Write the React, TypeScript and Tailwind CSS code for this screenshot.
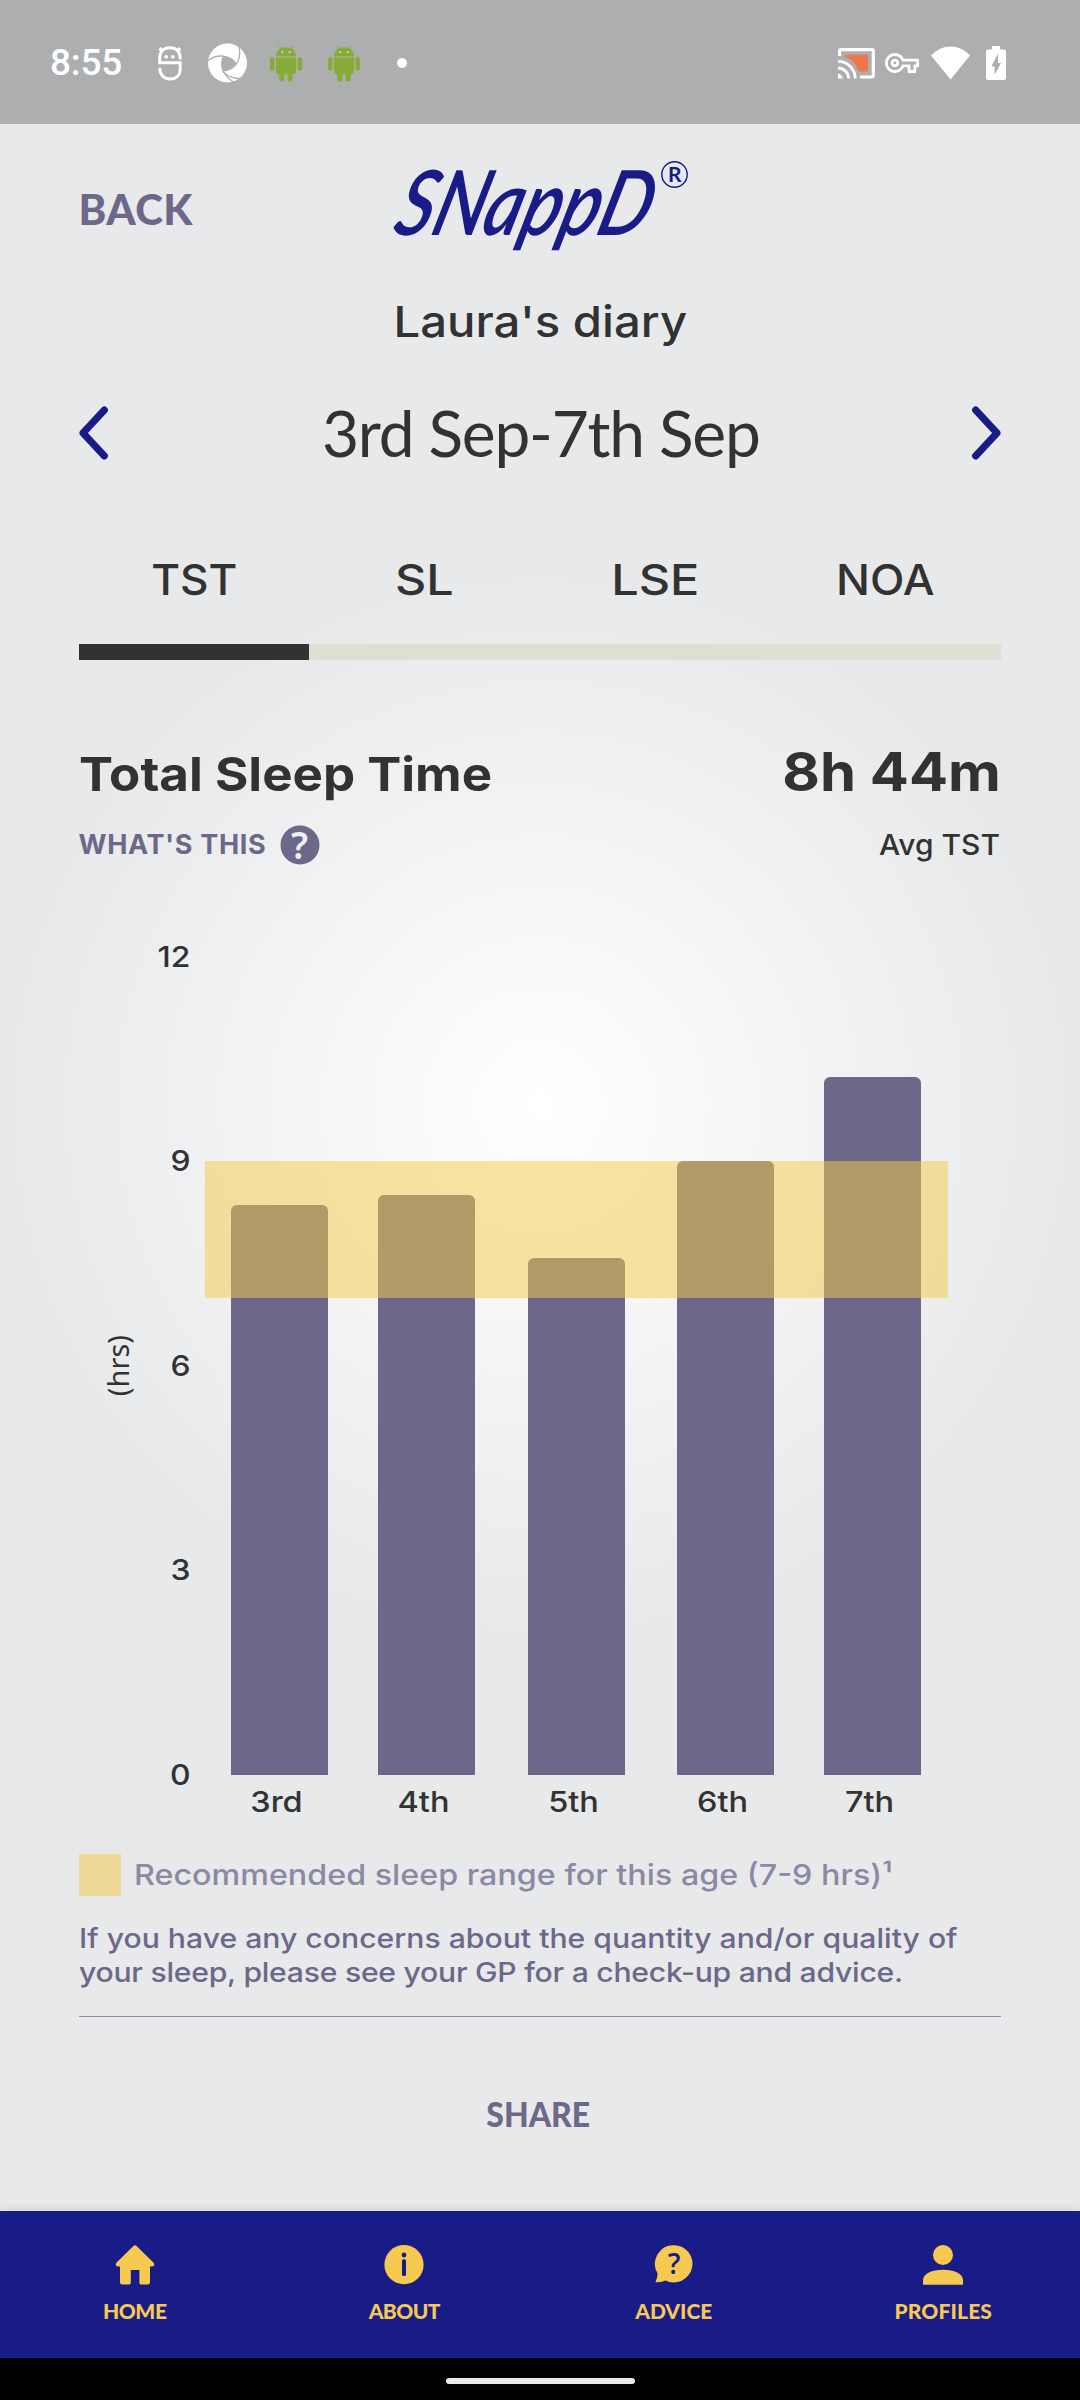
import { MdOutlineVpnKey } from 'react-icons/md';

const tabs = [
  { label: 'TST', className: 'scale-x-[1.027]' },
  { label: 'SL', className: 'scale-x-[1.127]' },
  { label: 'LSE', className: 'scale-x-[1.13]' },
  { label: 'NOA', className: 'scale-x-[1.045]' },
];

const ticks = [12, 9, 6, 3, 0];
const MAX_HOURS = 12;

const nights = [
  { day: '3rd', hours: 8.35, gap: '' },
  { day: '4th', hours: 8.5, gap: 'ml-[50px]' },
  { day: '5th', hours: 7.583, gap: 'ml-[52.5px]' },
  { day: '6th', hours: 9, gap: 'ml-[52.5px]' },
  { day: '7th', hours: 10.24, gap: 'ml-[50px]' },
];

const navItems = [
  { label: 'HOME', icon: HomeIcon, className: 'tracking-[-0.4px]' },
  { label: 'ABOUT', icon: AboutIcon, className: 'tracking-[-0.6px]' },
  { label: 'ADVICE', icon: AdviceIcon, className: '' },
  { label: 'PROFILES', icon: ProfilesIcon, className: 'tracking-[0.15px]' },
];

function HomeIcon() {
  return (
    <svg width="40" height="40" viewBox="0 0 40 40" fill="#f6c950">
      <path d="M18.4 1Q20 -.4 21.6 1L38.4 17.4Q40.6 20.8 37.4 21.4H35V37.6Q35 39.4 33.2 39.4H25.8Q24.4 39.4 24.4 37.8V25H15.8V37.8Q15.8 39.4 14.2 39.4H6.8Q5 39.4 5 37.6V21.4H2.6Q-.6 20.8 1.6 17.4Z" />
    </svg>
  );
}

function AboutIcon() {
  return (
    <svg width="40" height="40" viewBox="0 0 40 40">
      <circle cx="20" cy="19.7" r="19.6" fill="#f6c950" />
      <circle cx="20" cy="10" r="2.4" fill="#191b87" />
      <rect x="18" y="14.3" width="4" height="16.7" rx="1.6" fill="#191b87" />
    </svg>
  );
}

function AdviceIcon() {
  return (
    <svg width="40" height="40" viewBox="0 0 40 40">
      <path d="M20 .2A18.6 18.6 0 1 1 11.5 35.4Q6 37.8 1.4 37.2Q3.4 33.4 3.6 28.4A18.6 18.6 0 0 1 20 .2Z" fill="#f6c950" />
      <text x="20" y="28.8" textAnchor="middle" className="font-['Open_Sans',sans-serif] text-[28px] font-semibold" fill="#191b87">?</text>
    </svg>
  );
}

function ProfilesIcon() {
  return (
    <svg width="40" height="40" viewBox="0 0 40 40" fill="#f6c950">
      <circle cx="20" cy="10" r="10" />
      <path d="M0 39.7V35C0 28.6 9 24.7 20 24.7S40 28.6 40 35V39.7Z" />
    </svg>
  );
}

function MintIcon() {
  return (
    <svg width="24" height="35" viewBox="0 0 24 35" fill="none" stroke="#fff" strokeWidth="3">
      <path d="M22.2 13.6V12C22.2 5.4 18 1.8 12 1.8S1.7 5.4 1.7 12V16.8H22.2V23C22.2 29 18.4 33 12 33S1.8 29 1.8 21.8" />
      <path d="M1.6 2.2 4.6 5.6M22 2.2 19 5.6" strokeWidth="3.4" />
      <circle cx="8.2" cy="10.8" r="1.9" fill="#fff" stroke="none" />
      <circle cx="14.8" cy="10.8" r="1.9" fill="#fff" stroke="none" />
    </svg>
  );
}

function ApertureIcon() {
  return (
    <svg width="39" height="40" viewBox="0 0 39 40" className="ml-[26px]">
      <circle cx="19.5" cy="20" r="19.5" fill="#fff" />
      <path d="M15.3 13.2Q23.5 14 28.2 20.5Q23 26.8 14.8 27.6Q12.4 20 15.3 13.2Z" fill="#adaeb0" />
      <g fill="none" stroke="#adaeb0" strokeWidth="1.3">
        <path d="M0 17.6Q7.5 12 15.5 13.2Q24 14.6 28 20.5" />
        <path d="M15.4 13Q11.8 22 15.6 29Q19.5 36 27 39.6" />
        <path d="M14.6 27.8Q25.6 27 29.8 18.6Q33 11.6 30.8 3.6" />
        <path d="M15 28.6Q23 37 35.6 35.2" />
      </g>
    </svg>
  );
}

function AndroidIcon({ className }: { className: string }) {
  return (
    <svg width="32" height="37" viewBox="0 0 32 37" fill="#87ab35" className={className}>
      <path d="M6 11.3C6 5.6 10.4 2.3 16 2.3S26 5.6 26 11.3Z" />
      <path d="M6 12.4H26V27Q26 29.3 23.7 29.3H8.3Q6 29.3 6 27Z" />
      <rect x="0" y="12.2" width="4.6" height="13.6" rx="2.2" />
      <rect x="27.4" y="12.2" width="4.6" height="13.6" rx="2.2" />
      <rect x="9.3" y="25" width="5" height="11.6" rx="2.2" />
      <rect x="17.7" y="25" width="5" height="11.6" rx="2.2" />
      <path d="M9.3 .4 11.2 3.8M22.7 .4 20.8 3.8" stroke="#87ab35" strokeWidth="1" />
      <circle cx="12.3" cy="7.2" r="1.1" fill="#cfd6bb" />
      <circle cx="19.7" cy="7.2" r="1.1" fill="#cfd6bb" />
    </svg>
  );
}

function CastIcon() {
  return (
    <svg width="37" height="31" viewBox="0 0 37 31" fill="none" stroke="#fff" strokeWidth="3.2">
      <path d="M7 6.7H30V23.4H20.6Q17.4 12.4 7 9Z" fill="#f0774c" stroke="none" />
      <path d="M1.6 8V3.4Q1.6 1.7 3.3 1.7H33.6Q35.3 1.7 35.3 3.4V27.3Q35.3 29 33.6 29H22" />
      <path d="M0 13.4A17.2 17.2 0 0 1 17.2 30.6M0 20A10.6 10.6 0 0 1 10.6 30.6" strokeWidth="2.8" />
      <path d="M0 25.8A4.8 4.8 0 0 1 4.8 30.6H0Z" fill="#fff" stroke="none" />
    </svg>
  );
}

function StatusBar() {
  return (
    <div className="flex h-[124px] shrink-0 items-center bg-[#adaeb0] pt-[2px] pl-[50px] pr-[74px]">
      <span className="w-[108px] font-['Roboto',sans-serif] text-[37px] font-medium leading-[44px] tracking-[-0.2px] text-white">8:55</span>
      <MintIcon />
      <ApertureIcon />
      <AndroidIcon className="ml-[23px]" />
      <AndroidIcon className="ml-[26px]" />
      <span className="ml-[37px] size-[10px] rounded-full bg-white" />
      <div className="ml-auto flex items-center">
        <CastIcon />
        <MdOutlineVpnKey size={34} color="#fff" className="ml-[10px]" />
        <svg width="39" height="34" viewBox="0 0 39 34" fill="#fff" className="ml-[12px]">
          <path d="M0 9.5Q8.4 .4 19.5 .4T39 9.5L19.5 33.4Z" />
        </svg>
        <svg width="20" height="34" viewBox="0 0 20 34" fill="#fff" className="ml-[16px]">
          <path d="M6 0H14V3.4H18Q20 3.4 20 5.4V32Q20 34 18 34H2Q0 34 0 32V5.4Q0 3.4 2 3.4H6Z" />
          <path d="M12 7.6 5.3 20.4H8.6V29L15 17H12Z" fill="#adaeb0" />
        </svg>
      </div>
    </div>
  );
}

function Logo() {
  return (
    <svg width="300" height="104" viewBox="0 0 300 104" fill="#191b87" className="overflow-visible">
      <g transform="translate(1 78) skewX(-16)">
        <text x="0" y="0" textLength="254" lengthAdjust="spacingAndGlyphs" className="font-['Lato',sans-serif] text-[90px] font-semibold italic">SNappD</text>
      </g>
      <circle cx="284.5" cy="17.5" r="12.7" fill="none" stroke="#191b87" strokeWidth="1.4" />
      <text x="284.8" y="25" textAnchor="middle" className="font-['Lato',sans-serif] text-[21px] font-bold">R</text>
    </svg>
  );
}

function Chevron({ flip }: { flip?: boolean }) {
  return (
    <svg width="30" height="54" viewBox="0 0 30 54" fill="none" stroke="#191b87" strokeWidth="7" strokeLinecap="round" strokeLinejoin="round" className={flip ? 'rotate-180' : ''}>
      <path d="M25.4 4 4 27 25.4 50" />
    </svg>
  );
}

function SleepChart() {
  return (
    <div className="mt-[77px]">
      <div className="flex h-[848.5px] items-stretch text-[29px] font-medium leading-[30px]">
        <div className="ml-[24px] flex w-[34px] items-center">
          <span className="rotate-180 font-['Noto_Sans',sans-serif] font-normal [writing-mode:vertical-rl]">(hrs)</span>
        </div>
        <div className="flex w-[53.5px] flex-col justify-between text-right">
          {ticks.map((tick) => (
            <span key={tick} className="origin-right scale-x-110">{tick}</span>
          ))}
        </div>
        <div className="relative my-[15px] ml-[15px] flex w-[742.5px] items-end pl-[26px]">
          {nights.map((night) => (
            <div
              key={night.day}
              className={`w-[97px] rounded-t-[6px] bg-[#6d688a] ${night.gap}`}
              style={{ height: `${(night.hours / MAX_HOURS) * 100}%` }}
            />
          ))}
          {/* recommended range, 7 to 9 hours */}
          <div className="absolute inset-x-0 top-1/4 h-1/6 bg-[#f6c945]/50" />
        </div>
      </div>
      <div className="flex h-[23px] items-center pl-[149.5px] text-[29px] font-medium leading-[34px]">
        {nights.map((night) => (
          <span key={night.day} className={`w-[97px] scale-x-112 text-center ${night.gap}`}>{night.day}</span>
        ))}
      </div>
    </div>
  );
}

export default function App() {
  return (
    <div className="flex h-[2400px] w-[1080px] flex-col overflow-hidden bg-[#e8e9eb] font-['Inter',sans-serif] text-[#323232]">
      <StatusBar />

      <main className="h-[2087px] shrink-0 bg-[radial-gradient(circle_530px_at_540px_981px,#ffffff,#e8e9eb)] pl-[78.5px] pr-[79px]">
        <header className="grid h-[170px] grid-cols-[1fr_300px_1fr] items-center">
          <button className="text-left font-['Lato',sans-serif] text-[42px] font-black leading-[50px] tracking-[0.4px] text-[#6d688a]">BACK</button>
          <Logo />
        </header>

        <h1 className="h-[55px] scale-x-110 text-center text-[43px] font-medium leading-[55px]">Laura's diary</h1>

        <div className="flex h-[167px] items-center justify-between">
          <Chevron />
          <span className="pl-[2px] font-['Lato',sans-serif] text-[64px] leading-[76px] tracking-[-1.2px]">3rd Sep-7th Sep</span>
          <Chevron flip />
        </div>

        <div className="grid h-[125px] grid-cols-4 items-center text-center text-[43px] font-medium leading-[56px]">
          {tabs.map((tab) => (
            <span key={tab.label} className={tab.className}>{tab.label}</span>
          ))}
        </div>
        <div className="mt-[2.5px] h-[16px] bg-[#dfdfd6]">
          <div className="h-full w-1/4 bg-[#323232]" />
        </div>

        <div className="mt-[80px] flex h-[64px] items-baseline justify-between font-bold">
          <h2 className="origin-left scale-x-[1.086] text-[47px] leading-[60px]">Total Sleep Time</h2>
          <span className="origin-right scale-x-[1.072] text-[54px] leading-[64px]">8h 44m</span>
        </div>
        <div className="mt-[21px] flex h-[40px] items-center justify-between">
          <div className="flex items-center gap-[14px] text-[#6d688a]">
            <span className="text-[27px] font-bold leading-[34px] tracking-[0.65px]">WHAT'S THIS</span>
            <svg width="40" height="40" viewBox="0 0 40 40">
              <circle cx="20" cy="20" r="19.5" fill="#6d688a" />
              <text x="19.5" y="34" textAnchor="middle" className="font-['Noto_Sans',sans-serif] text-[37px] font-semibold" fill="#eeeff1">?</text>
            </svg>
          </div>
          <span className="origin-right scale-x-[1.033] pr-[1px] text-[29px] font-medium leading-[36px]">Avg TST</span>
        </div>

        <SleepChart />

        <div className="mt-[41px] flex h-[42px] items-center gap-[13px]">
          <div className="size-[42px] shrink-0 bg-[#f6c945]/50" />
          <span className="origin-left scale-x-[1.113] whitespace-nowrap text-[29px] font-medium leading-[36px] text-[#8d89a5]">
            Recommended sleep range for this age (7-9 hrs)¹
          </span>
        </div>
        <p className="mt-[26px] origin-left scale-x-[1.117] whitespace-nowrap text-[27px] font-medium leading-[34px] text-[#6d688a]">
          If you have any concerns about the quantity and/or quality of
          <br />
          <span className="tracking-[-0.24px]">your sleep, please see your GP for a check-up and advice.</span>
        </p>
        <div className="mt-[26px] h-px bg-[#8f8ea8]" />

        <div className="flex h-[194px] items-center justify-center pr-[3px]">
          <button className="scale-x-[0.94] font-['Lato',sans-serif] text-[34px] font-black leading-[42px] text-[#6d688a]">SHARE</button>
        </div>
      </main>

      <nav className="grid h-[147px] shrink-0 grid-cols-4 bg-[#191b87] pt-[34px] pr-[2px] shadow-[0_-3px_8px_rgba(0,0,0,0.08)]">
        {navItems.map((item) => {
          const Icon = item.icon;
          return (
            <div key={item.label} className="flex flex-col items-center">
              <Icon />
              <span className={`mt-[14px] font-['Lato',sans-serif] text-[21px] font-black leading-[24px] text-[#f6c950] ${item.className}`}>
                {item.label}
              </span>
            </div>
          );
        })}
      </nav>

      <div className="flex h-[42px] shrink-0 justify-center bg-black pt-[20px]">
        <div className="h-[6px] w-[189px] rounded-full bg-[#e9e8ea]" />
      </div>
    </div>
  );
}
